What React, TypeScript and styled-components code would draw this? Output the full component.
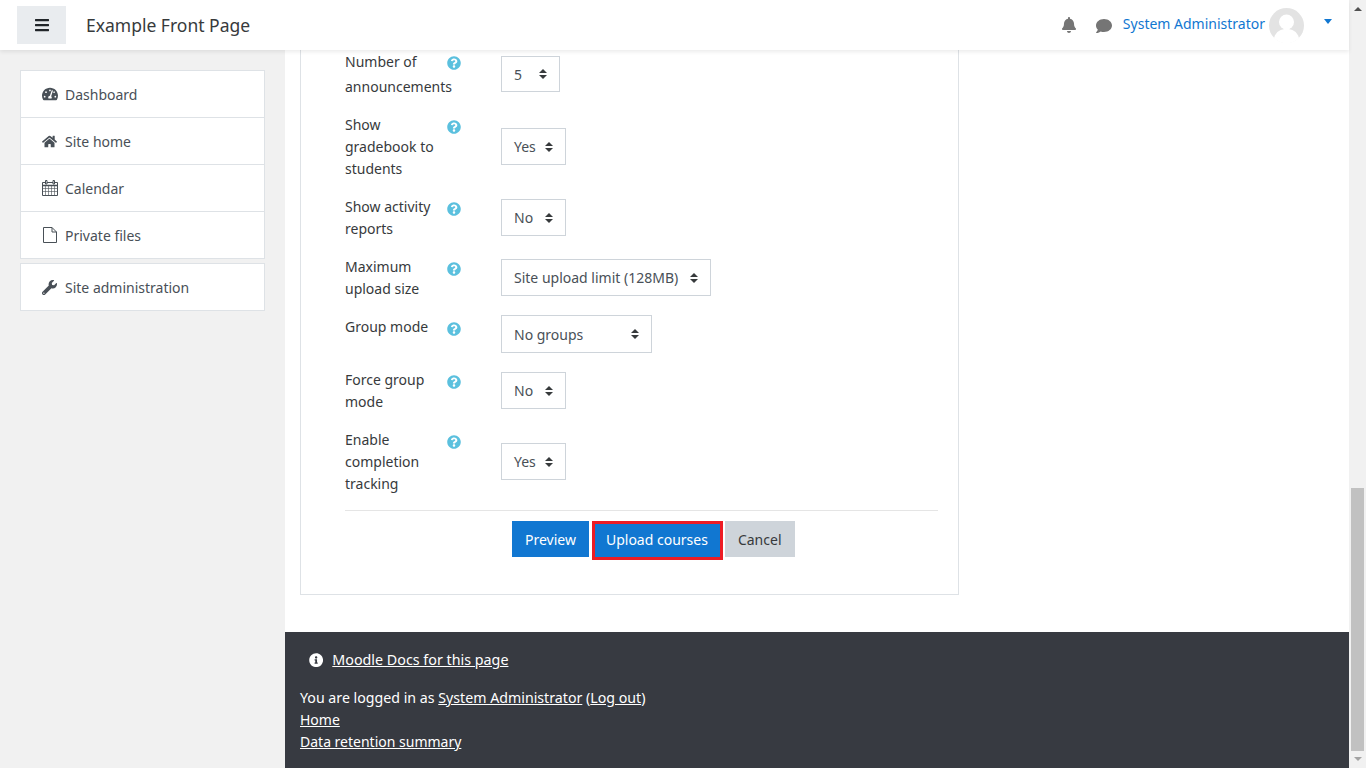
import React from "react";
import styled, { createGlobalStyle } from "styled-components";
import {
  FaBars,
  FaBell,
  FaComment,
  FaHome,
  FaInfoCircle,
  FaQuestionCircle,
  FaTachometerAlt,
  FaWrench,
} from "react-icons/fa";

const GlobalStyle = createGlobalStyle`
  html, body {
    margin: 0;
    padding: 0;
    height: 768px;
    overflow: hidden;
    background: #fff;
    font-family: "Noto Sans", "Open Sans", sans-serif;
    font-size: 14px;
    color: #373a3c;
  }
  * { box-sizing: border-box; }
`;

const CalendarIcon = () => (
  <svg width="16" height="16" viewBox="0 0 16 16" fill="none" stroke="#495057">
    <path d="M.5 2.500h15v13H.5z" />
    <path d="M.5 5.500h15" strokeWidth="1.500" />
    <path d="M3.500 6v9M6.500 6v9M9.500 6v9M12.500 6v9M1 8.500h14M1 11.500h14" strokeOpacity=".6" />
    <path d="M3.500.5h1.500v3.500H3.500zM11 .5h1.500v3.500H11z" fill="#fff" />
  </svg>
);

const FileIcon = () => (
  <svg width="14" height="16" viewBox="0 0 14 16" fill="none" stroke="#495057">
    <path d="M.5.5H9L13.500 5v10.500H.5z" />
    <path d="M9 .5V5h4.500" />
  </svg>
);

const navTop = [
  { label: "Dashboard", icon: <FaTachometerAlt size={16} /> },
  { label: "Site home", icon: <FaHome /> },
  { label: "Calendar", icon: <CalendarIcon /> },
  { label: "Private files", icon: <FileIcon /> },
];

const fields = [
  { lines: ["Number of", "announcements"], value: "5", width: 59, lh: 25, after: 15, height: 36, mb: 0, helpTop: 7 },
  { lines: ["Show", "gradebook to", "students"], value: "Yes", width: 65 },
  { lines: ["Show activity", "reports"], value: "No", width: 65 },
  { lines: ["Maximum", "upload size"], value: "Site upload limit (128MB)", width: 210 },
  { lines: ["Group mode"], value: "No groups", width: 151, height: 38, mt: -1, mb: 0 },
  { lines: ["Force group", "mode"], value: "No", width: 65 },
  { lines: ["Enable", "completion", "tracking"], value: "Yes", width: 65, after: 15 },
];

const SortArrows = () => (
  <svg width="8" height="10" viewBox="0 0 8 10">
    <path d="M4 0 8 4H0zM4 10 0 6h8z" fill="#373a3c" />
  </svg>
);

const App: React.FC = () => (
  <Page>
    <GlobalStyle />
    <Main>
      <Header>
        <MenuButton>
          <FaBars />
        </MenuButton>
        <SiteTitle>Example Front Page</SiteTitle>
        <UserArea>
          <HeaderIcon $left={0} $top={0}>
            <FaBell />
          </HeaderIcon>
          <HeaderIcon $left={19} $top={2}>
            <FaComment />
          </HeaderIcon>
          <UserName>System Administrator</UserName>
          <Avatar>
            <svg width="35" height="35" viewBox="0 0 35 35">
              <circle cx="17.5" cy="17.5" r="17.5" fill="#e3e3e3" />
              <circle cx="17.5" cy="14" r="7.5" fill="#fff" />
              <path d="M5 30c2-7 7-9 12.500-9S28 23 30 30a17.500 17.500 0 0 1-25 0z" fill="#fff" />
            </svg>
          </Avatar>
          <Caret />
        </UserArea>
      </Header>
      <Body>
        <Sidebar>
          <NavBlock>
            {navTop.map((item) => (
              <NavItem key={item.label}>
                <NavIcon>{item.icon}</NavIcon>
                {item.label}
              </NavItem>
            ))}
          </NavBlock>
          <NavBlock>
            <NavItem>
              <NavIcon>
                <FaWrench />
              </NavIcon>
              Site administration
            </NavItem>
          </NavBlock>
        </Sidebar>
        <Content>
          <Card>
            {fields.map((field) => (
              <FieldRow key={field.lines[0]} $after={field.after ?? 16}>
                <FieldLabel $lh={field.lh ?? 22}>
                  {field.lines.map((line) => (
                    <div key={line}>{line}</div>
                  ))}
                </FieldLabel>
                <HelpIcon $top={field.helpTop ?? 6}>
                  <FaQuestionCircle />
                </HelpIcon>
                <SelectBox
                  $width={field.width}
                  $height={field.height ?? 37}
                  $mt={field.mt ?? 0}
                  $mb={field.mb ?? 1}
                >
                  {field.value}
                  <SortArrows />
                </SelectBox>
              </FieldRow>
            ))}
            <Divider />
            <Buttons>
              <Button $kind="primary">Preview</Button>
              <Button $kind="highlight">Upload courses</Button>
              <Button $kind="secondary">Cancel</Button>
            </Buttons>
          </Card>
          <Footer>
            <DocsLine>
              <FaInfoCircle />
              <FooterLink>Moodle Docs for this page</FooterLink>
            </DocsLine>
            <SessionLine>
              You are logged in as <FooterLink>System Administrator</FooterLink> (
              <FooterLink>Log out</FooterLink>)
            </SessionLine>
            <FooterLine>
              <FooterLink>Home</FooterLink>
            </FooterLine>
            <FooterLine>
              <FooterLink>Data retention summary</FooterLink>
            </FooterLine>
          </Footer>
        </Content>
      </Body>
    </Main>
    <Scrollbar>
      <ScrollArrowUp />
      <ScrollThumb />
      <ScrollArrowDown />
    </Scrollbar>
  </Page>
);

export default App;

// Styled Components
const Page = styled.div`
  display: flex;
  width: 1366px;
  height: 768px;
  overflow: hidden;
`;

const Main = styled.div`
  width: 1349px;
  display: flex;
  flex-direction: column;
`;

const Header = styled.header`
  position: relative;
  z-index: 2;
  flex: none;
  height: 50px;
  display: flex;
  align-items: center;
  background: #fff;
  box-shadow: 0 2px 4px rgba(0, 0, 0, 0.08);
`;

const MenuButton = styled.div`
  width: 49px;
  height: 38px;
  margin-left: 17px;
  background: #e9ecef;
  color: #212529;
  display: flex;
  align-items: center;
  justify-content: center;
  font-size: 16px;
`;

const SiteTitle = styled.div`
  margin-left: 20px;
  font-size: 17.5px;
  color: #373a3c;
`;

const UserArea = styled.div`
  margin-left: auto;
  display: flex;
  align-items: center;
  height: 100%;
  padding-right: 17px;
`;

const HeaderIcon = styled.span<{ $left: number; $top: number }>`
  display: flex;
  margin-left: ${(p) => p.$left}px;
  margin-top: ${(p) => p.$top}px;
  color: #757575;
  font-size: 16px;
`;

const UserName = styled.span`
  margin-left: 11px;
  margin-top: -4px;
  font-size: 14px;
  color: #1177d1;
`;

const Avatar = styled.span`
  display: flex;
  margin-left: 4px;
`;

const Caret = styled.span`
  margin-left: 20px;
  margin-bottom: 7px;
  border-left: 4.5px solid transparent;
  border-right: 4.5px solid transparent;
  border-top: 5px solid #1177d1;
`;

const Body = styled.div`
  flex: 1;
  min-height: 0;
  display: flex;
`;

const Sidebar = styled.aside`
  flex: none;
  width: 285px;
  padding: 20px 20px 0;
  background: #f1f1f1;
  display: flex;
  flex-direction: column;
  gap: 4px;
`;

const NavBlock = styled.nav`
  background: #fff;
  border: 1px solid #dee2e6;
  width: 245px;
`;

const NavItem = styled.div`
  height: 46px;
  display: flex;
  align-items: center;
  padding-left: 20px;
  font-size: 14px;
  color: #495057;

  & + & {
    border-top: 1px solid #dee2e6;
    height: 47px;
  }
`;

const NavIcon = styled.span`
  width: 17px;
  margin-right: 7px;
  display: flex;
  justify-content: center;
  font-size: 15px;
  color: #495057;
`;

const Content = styled.main`
  flex: 1;
  display: flex;
  flex-direction: column;
`;

const Card = styled.section`
  width: 659px;
  margin: -1px 0 37px 15px;
  padding: 0 20px 34px 44px;
  border: 1px solid #dee2e6;
  border-top: none;
`;

const FieldRow = styled.div<{ $after: number }>`
  display: grid;
  grid-template-columns: 102px 54px auto;
  align-items: center;
  margin-bottom: ${(p) => p.$after}px;
`;

const FieldLabel = styled.div<{ $lh: number }>`
  align-self: start;
  font-size: 14px;
  line-height: ${(p) => p.$lh}px;
  white-space: nowrap;
  color: #373a3c;
`;

const HelpIcon = styled.span<{ $top: number }>`
  align-self: start;
  display: flex;
  margin-top: ${(p) => p.$top}px;
  font-size: 14px;
  color: #5bc0de;
`;

const SelectBox = styled.div<{ $width: number; $height: number; $mt: number; $mb: number }>`
  width: ${(p) => p.$width}px;
  height: ${(p) => p.$height}px;
  margin-top: ${(p) => p.$mt}px;
  margin-bottom: ${(p) => p.$mb}px;
  padding: 0 12px;
  display: flex;
  align-items: center;
  justify-content: space-between;
  justify-self: start;
  border: 1px solid #ced4da;
  font-size: 14px;
  color: #495057;
`;

const Divider = styled.hr`
  margin: 0;
  border: none;
  border-top: 1px solid #e5e5e5;
`;

const Buttons = styled.div`
  display: flex;
  align-items: flex-start;
  gap: 2px;
  margin-top: 10px;
  padding-left: 167px;
`;

const Button = styled.div<{ $kind: "primary" | "highlight" | "secondary" }>`
  height: 36px;
  display: flex;
  align-items: center;
  font-size: 14px;
  padding: 0 13px;
  background: ${(p) => (p.$kind === "secondary" ? "#ced4da" : "#1177d1")};
  color: ${(p) => (p.$kind === "secondary" ? "#373a3c" : "#fff")};
  ${(p) =>
    p.$kind === "highlight"
      ? "border: 3px solid #ed1c24; height: 39px; padding: 0 12px 2px 11px; margin-left: 1px;"
      : ""}
`;

const Footer = styled.footer`
  flex: 1;
  padding: 17px 15px 0;
  background: #373a41;
  color: #fff;
  font-size: 14px;
  line-height: 22px;
`;

const DocsLine = styled.div`
  display: flex;
  align-items: center;
  gap: 9px;
  padding-left: 9px;
  margin-bottom: 16px;
  font-size: 14.3px;
`;

const SessionLine = styled.div`
  font-size: 14.2px;
`;

const FooterLine = styled.div``;

const FooterLink = styled.span`
  text-decoration: underline;
`;

const Scrollbar = styled.div`
  flex: none;
  width: 17px;
  height: 768px;
  background: #f1f1f1;
  display: flex;
  flex-direction: column;
  align-items: center;
`;

const ScrollArrowUp = styled.span`
  margin-top: 7px;
  border-left: 4px solid transparent;
  border-right: 4px solid transparent;
  border-bottom: 4px solid #505050;
`;

const ScrollThumb = styled.div`
  width: 13px;
  height: 263px;
  margin-top: auto;
  background: #c1c1c1;
`;

const ScrollArrowDown = styled.span`
  margin-top: 6px;
  margin-bottom: 7px;
  border-left: 4px solid transparent;
  border-right: 4px solid transparent;
  border-top: 4px solid #a3a3a3;
`;
